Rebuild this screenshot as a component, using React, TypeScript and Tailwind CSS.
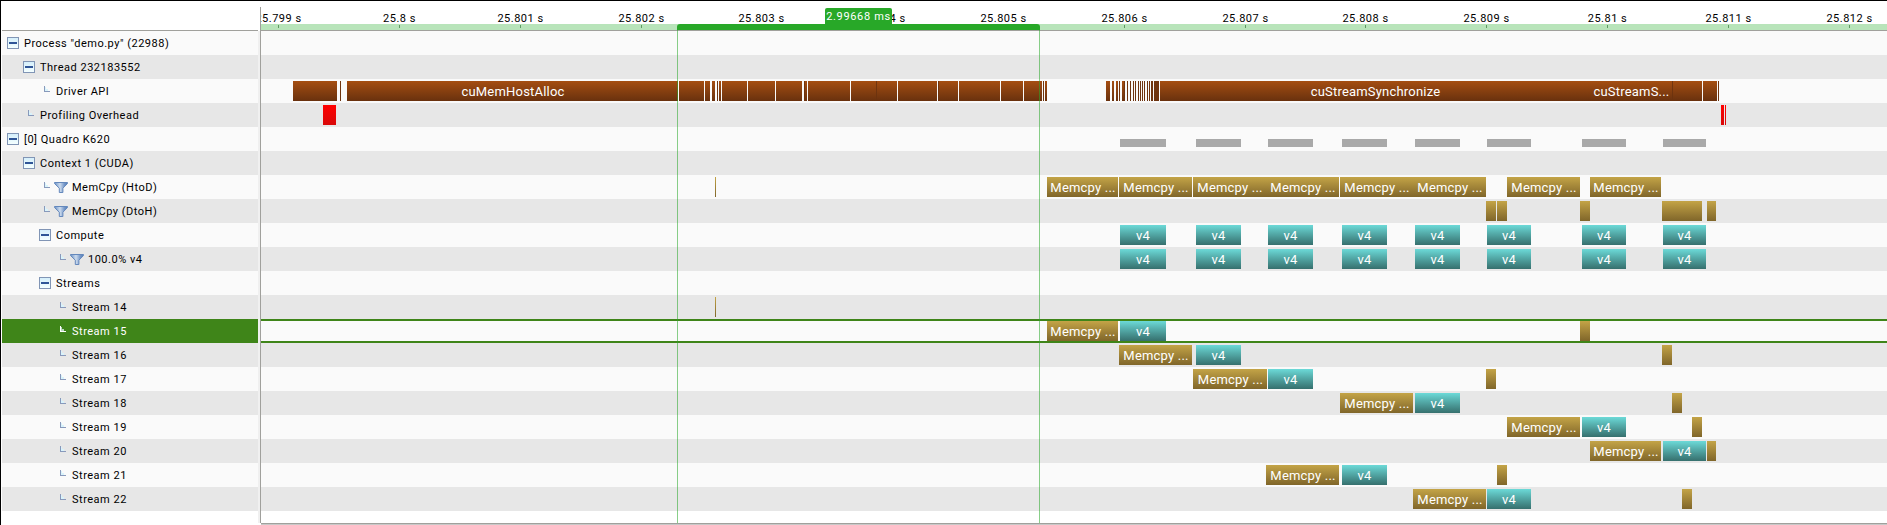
import React from "react";

type Kind = "api" | "apiDark" | "overhead" | "busy" | "copy" | "kernel";
type Bar = [start: number, end: number, kind: Kind, label?: string];
type Marker = "minus" | "leaf";
type RowData = { level: number; marker: Marker; label: string; filter?: boolean; selected?: boolean; bars?: Bar[] };

const ORIGIN = 261;

const kindClass: Record<Kind, string> = {
  api: "h-5 bg-linear-to-b from-[#a54e11] to-[#69310e]",
  apiDark: "h-5 bg-linear-to-b from-[#73360f] to-[#6b320e]",
  overhead: "h-5 bg-linear-to-b from-[#ff0000] to-[#d90808]",
  busy: "h-2 mt-1.5 bg-[#a9a9a9]",
  copy: "h-5 bg-linear-to-b from-[#c4a447] to-[#80662a]",
  kernel: "h-5 bg-linear-to-b from-[#6cdad8] to-[#36706e]",
};

const C = (a: number, b: number): Bar => [a, b, "copy", b - a > 50 ? "Memcpy ..." : undefined];
const K = (a: number, b: number): Bar => [a, b, "kernel", "v4"];
const A = (a: number, b: number, label?: string): Bar => [a, b, "api", label];
const D = (a: number, b: number): Bar => [a, b, "apiDark"];

const kernels: [number, number][] = [
  [1120, 1166], [1196, 1241], [1268, 1313], [1342, 1387],
  [1415, 1460], [1487, 1531], [1582, 1626], [1663, 1706],
];

const driver: Bar[] = [
  A(293, 337), D(340, 341), A(347, 678, "cuMemHostAlloc"),
  A(679, 704), A(705, 710), A(712, 715), D(717, 718), A(719, 721), A(722, 747), A(748, 775), A(776, 802),
  D(804, 805), A(805, 807), A(808, 850), A(851, 876), D(876, 877), A(877, 897), A(898, 937),
  D(938, 939), A(939, 958), A(959, 1000), A(1001, 1023), A(1024, 1042), D(1043, 1044), A(1045, 1047),
  A(1106, 1110), A(1112, 1114), A(1116, 1118), D(1119, 1120), A(1122, 1124), D(1124, 1125),
  D(1127, 1128), D(1130, 1131), D(1133, 1134), D(1135, 1136), D(1138, 1139), D(1140, 1141),
  D(1142, 1143), D(1144, 1145), D(1147, 1148), D(1149, 1150), D(1151, 1153), D(1154, 1159),
  A(1160, 1590, "cuStreamSynchronize"), A(1590, 1672, "cuStreamS..."), D(1672, 1673),
  A(1673, 1702), A(1703, 1717), D(1718, 1719),
];

const rows: RowData[] = [
  { level: 0, marker: "minus", label: 'Process "demo.py" (22988)' },
  { level: 1, marker: "minus", label: "Thread 232183552" },
  { level: 2, marker: "leaf", label: "Driver API", bars: driver },
  { level: 1, marker: "leaf", label: "Profiling Overhead", bars: [[323, 336, "overhead"], [1721, 1724, "overhead"], [1725, 1726, "overhead"]] },
  { level: 0, marker: "minus", label: "[0] Quadro K620", bars: kernels.map(([a, b]): Bar => [a, b, "busy"]) },
  { level: 1, marker: "minus", label: "Context 1 (CUDA)" },
  {
    level: 2, marker: "leaf", filter: true, label: "MemCpy (HtoD)",
    bars: [C(715, 716), C(1047, 1118), C(1119, 1192), C(1193, 1266), C(1266, 1339), C(1340, 1413), C(1413, 1486), C(1507, 1580), C(1590, 1661)],
  },
  {
    level: 2, marker: "leaf", filter: true, label: "MemCpy (DtoH)",
    bars: [C(1486, 1496), C(1497, 1507), C(1580, 1590), C(1662, 1702), C(1707, 1716)],
  },
  { level: 2, marker: "minus", label: "Compute", bars: kernels.map(([a, b]) => K(a, b)) },
  { level: 3, marker: "leaf", filter: true, label: "100.0% v4", bars: kernels.map(([a, b]) => K(a, b)) },
  { level: 2, marker: "minus", label: "Streams" },
  { level: 3, marker: "leaf", label: "Stream 14", bars: [C(715, 716)] },
  { level: 3, marker: "leaf", label: "Stream 15", selected: true, bars: [C(1047, 1118), K(1120, 1166), C(1580, 1590)] },
  { level: 3, marker: "leaf", label: "Stream 16", bars: [C(1119, 1192), K(1196, 1241), C(1662, 1672)] },
  { level: 3, marker: "leaf", label: "Stream 17", bars: [C(1193, 1267), K(1268, 1313), C(1486, 1496)] },
  { level: 3, marker: "leaf", label: "Stream 18", bars: [C(1340, 1413), K(1415, 1460), C(1672, 1682)] },
  { level: 3, marker: "leaf", label: "Stream 19", bars: [C(1507, 1580), K(1582, 1626), C(1692, 1702)] },
  { level: 3, marker: "leaf", label: "Stream 20", bars: [C(1590, 1661), K(1663, 1706), C(1707, 1716)] },
  { level: 3, marker: "leaf", label: "Stream 21", bars: [C(1266, 1339), K(1342, 1387), C(1497, 1507)] },
  { level: 3, marker: "leaf", label: "Stream 22", bars: [C(1413, 1486), K(1487, 1531), C(1682, 1692)] },
];

const ticks: [number, string][] = [
  [278, "25.799 s"], [399, "25.8 s"], [520, "25.801 s"], [641, "25.802 s"], [761, "25.803 s"],
  [882, "25.804 s"], [1003, "25.805 s"], [1124, "25.806 s"], [1245, "25.807 s"], [1365, "25.808 s"],
  [1486, "25.809 s"], [1607, "25.81 s"], [1728, "25.811 s"], [1849, "25.812 s"],
];

const indent = ["pl-[5px]", "pl-[21px]", "pl-[37px]", "pl-[53px]"];

function MinusBox() {
  return (
    <span className="mr-[5px] flex size-3 shrink-0 items-center justify-center border border-[#8195b5] bg-linear-to-b from-[#d5effb] to-[#f4ffff]">
      <span className="h-0.5 w-2 bg-[#2f5597]" />
    </span>
  );
}

function Leaf({ selected }: { selected?: boolean }) {
  return (
    <svg className="mr-1 ml-[5px] mb-1 shrink-0" width="6" height="6" shapeRendering="crispEdges">
      <path d="M1 1h1v2h2v2H1z" fill={selected ? "#b9d8c0" : "#d9f3fb"} />
      <path d="M0 0h1v5h5v1H0z" fill={selected ? "#ffffff" : "#8899bb"} />
    </svg>
  );
}

function Filter() {
  return (
    <svg className="mt-px mr-1 shrink-0" width="14" height="11" viewBox="0 0 14 11">
      <defs>
        <linearGradient id="funnel" x1="0" x2="1">
          <stop offset="0" stopColor="#6890c6" />
          <stop offset="0.42" stopColor="#cddcee" />
          <stop offset="0.75" stopColor="#7597c8" />
          <stop offset="1" stopColor="#557fb8" />
        </linearGradient>
      </defs>
      <path d="M0.5 0.5h13v1L8.9 6.2v4.3H5.3V6.2L0.5 1.5z" fill="url(#funnel)" stroke="#6488bc" />
    </svg>
  );
}

function Track({ bars }: { bars: Bar[] }) {
  return (
    <>
      {bars.map(([start, end, kind, label], i) => (
        <div
          key={i}
          className={`flex shrink-0 items-center justify-center overflow-hidden whitespace-nowrap text-[13px] leading-5 tracking-[0.2px] text-white ${kindClass[kind]}`}
          style={{ width: end - start, marginLeft: start - (i ? bars[i - 1][1] : ORIGIN) }}
        >
          {label && <span className={kind === "kernel" ? "pt-0.5" : "pt-0.5 pl-px"}>{label}</span>}
        </div>
      ))}
    </>
  );
}

export default function App() {
  return (
    <div className="flex h-[525px] w-[1887px] overflow-hidden border-t border-l border-black bg-white pl-px font-[Roboto,sans-serif] text-[11px] font-normal tracking-[0.5px] text-black">
      <aside className="flex w-64 shrink-0 flex-col">
        <div className="h-[30px] shrink-0 border-b border-[#a0a09c]" />
        {rows.map((r, i) => (
          <div
            key={i}
            className={`flex h-6 shrink-0 items-center whitespace-nowrap ${indent[r.level]} ${
              r.selected ? "bg-[#3f8519] text-white" : i % 2 ? "bg-[#e7e7e7]" : "bg-[#fafafa]"
            }`}
          >
            {r.marker === "minus" ? <MinusBox /> : <Leaf selected={r.selected} />}
            {r.filter && <Filter />}
            <span className={r.marker === "leaf" && !r.filter ? "ml-0.5 pt-0.5" : "pt-0.5"}>{r.label}</span>
          </div>
        ))}
      </aside>
      <div className="mt-[30px] mb-0.5 w-0.5 shrink-0 bg-[#f0f0f0]" />
      <div className="mt-1.5 mb-0.5 w-px shrink-0 bg-[#a0a09c]" />
      <main className="relative flex min-w-0 flex-1 flex-col overflow-hidden">
        <div className="flex h-[30px] shrink-0 flex-col border-b border-[#a0a09c]">
          <div className="h-[23px]" />
          <div className="flex h-1.5 bg-[#b8e4ba]">
            {ticks.map(([x, label], i) => (
              <div
                key={label}
                className="flex w-px shrink-0 flex-col items-center"
                style={{ marginLeft: x - (i ? ticks[i - 1][0] + 1 : ORIGIN) }}
              >
                <span className="-mt-3 h-[13px] whitespace-nowrap leading-[13px]">{label}</span>
                <span className="h-[3px] w-px shrink-0 bg-[#5e9a62]" />
              </div>
            ))}
          </div>
        </div>
        {rows.map((r, i) => (
          <div
            key={i}
            className={`flex h-6 shrink-0 items-start ${
              r.selected ? "border-y-2 border-[#3f8519] bg-[#fafafa]" : i % 2 ? "bg-[#e7e7e7] pt-0.5" : "bg-[#fafafa]"
            } ${r.selected || i % 2 ? "" : r.bars?.[0][2] === "busy" ? "pt-1.5" : "pt-0.5"}`}
          >
            {r.bars && <Track bars={r.bars} />}
          </div>
        ))}
        <div className="mt-3 h-px shrink-0 bg-[#a0a09c]" />
        <div className="h-px shrink-0 bg-[#c8c8c8]" />
        <div className="absolute top-[23px] left-[416px] h-1.5 w-[363px] rounded-t-[3px] bg-[#28a828]" />
        <div className="absolute top-[29px] left-[416px] h-[493px] w-[363px] border-x border-[#28a828]/55" />
        <div className="absolute top-[7px] left-[564px] flex h-4 w-[67px] items-center justify-center rounded-t-xs bg-[#28a828] pt-0.5 whitespace-nowrap tracking-[0.65px] text-white">
          2.99668 ms
        </div>
      </main>
    </div>
  );
}
